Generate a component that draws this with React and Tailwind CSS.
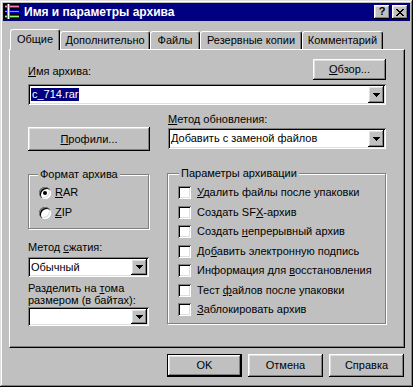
const raised =
  "bg-[#c0c0c0] shadow-[inset_-1px_-1px_#000,inset_1px_1px_#fff,inset_-2px_-2px_#808080,inset_2px_2px_#dfdfdf]";
const sunken =
  "bg-white shadow-[inset_1px_1px_#808080,inset_-1px_-1px_#fff,inset_2px_2px_#000,inset_-2px_-2px_#dfdfdf]";
const etched = "border border-[#808080] shadow-[inset_1px_1px_#fff,1px_1px_#fff]";

function RarIcon() {
  return (
    <svg width="16" height="16" shapeRendering="crispEdges" className="shrink-0">
      <rect x="0" y="0" width="16" height="5" fill="#000" />
      <rect x="1" y="1" width="14" height="3" fill="#c00060" />
      <rect x="1" y="2" width="14" height="1" fill="#ff80c0" />
      <rect x="0" y="5" width="16" height="5" fill="#000" />
      <rect x="1" y="6" width="14" height="3" fill="#0000c0" />
      <rect x="1" y="7" width="14" height="1" fill="#40c0ff" />
      <rect x="0" y="10" width="16" height="5" fill="#000" />
      <rect x="1" y="11" width="14" height="3" fill="#008000" />
      <rect x="1" y="12" width="14" height="1" fill="#80ff80" />
      <rect x="3" y="0" width="3" height="15" fill="#808080" />
      <rect x="4" y="0" width="1" height="15" fill="#fff" />
    </svg>
  );
}

function DropButton() {
  return (
    <div className={`${raised} w-[16px] h-full shrink-0 flex items-center justify-center`}>
      <svg width="7" height="4" shapeRendering="crispEdges">
        <path d="M0 0h7v1H0zM1 1h5v1H1zM2 2h3v1H2zM3 3h1v1H3z" fill="#000" />
      </svg>
    </div>
  );
}

function Combo({ className = "", children }) {
  return (
    <div className={`${sunken} p-[2px] flex ${className}`}>
      <div className="flex-1 flex items-center pl-[1px] overflow-hidden whitespace-nowrap">{children}</div>
      <DropButton />
    </div>
  );
}

function Check({ children }) {
  return (
    <div className="flex items-center h-[13px]">
      <div className={`w-[13px] h-[13px] shrink-0 ${sunken}`} />
      <span className="ml-[6px] whitespace-nowrap">{children}</span>
    </div>
  );
}

function Radio({ checked, children }) {
  return (
    <div className="flex items-center h-[13px]">
      <div className="w-[12px] h-[12px] rounded-full bg-white shadow-[inset_1px_1px_#808080,inset_2px_2px_#000,inset_-1px_-1px_#fff,inset_-2px_-2px_#dfdfdf] flex items-center justify-center">
        {checked && <div className="w-[4px] h-[4px] rounded-full bg-black" />}
      </div>
      <span className="ml-[4px]">{children}</span>
    </div>
  );
}

function Tab({ active, width, children }) {
  return (
    <div
      className={`flex items-center justify-center bg-[#c0c0c0] border-l border-t border-r border-l-white border-t-white border-r-black rounded-t-[3px] shadow-[inset_-1px_0_#808080] ${width} ${
        active ? "h-[21px] -mb-[1px] relative z-10 pb-[2px]" : "h-[18px]"
      }`}
    >
      {children}
    </div>
  );
}

function Button({ width = "w-[75px]", height = "h-[23px]", children, def }) {
  if (def) {
    return (
      <div className={`${width} ${height} border border-black flex`}>
        <div className={`${raised} flex-1 flex items-center justify-center`}>{children}</div>
      </div>
    );
  }
  return <div className={`${raised} ${width} ${height} flex items-center justify-center`}>{children}</div>;
}

export default function App() {
  return (
    <div className="w-[413px] h-[387px] bg-[#c0c0c0] p-[3px] flex flex-col text-[11px] leading-[13px] text-black font-['Liberation_Sans',Arial,sans-serif] shadow-[inset_-1px_-1px_#000,inset_1px_1px_#dfdfdf,inset_-2px_-2px_#808080,inset_2px_2px_#fff]">
      {/* title bar */}
      <div className="h-[18px] bg-[#000080] flex items-center pl-[1px] pr-[2px]">
        <RarIcon />
        <span className="ml-[4px] text-white font-bold text-[12px]">Имя и параметры архива</span>
        <div className="ml-auto flex gap-[2px]">
          <div className={`${raised} w-[16px] h-[14px] flex items-center justify-center font-bold text-[11px] leading-none pb-[1px]`}>?</div>
          <div className={`${raised} w-[16px] h-[14px] flex items-center justify-center`}>
            <svg width="8" height="7" shapeRendering="crispEdges">
              <path
                d="M0 0h2v1H0zM6 0h2v1H6zM1 1h2v1H1zM5 1h2v1H5zM2 2h4v1H2zM3 3h2v1H3zM2 4h4v1H2zM1 5h2v1H1zM5 5h2v1H5zM0 6h2v1H0zM6 6h2v1H6z"
                fill="#000"
              />
            </svg>
          </div>
        </div>
      </div>

      {/* tabs */}
      <div className="mt-[8px] pl-[7px] flex items-end">
        <Tab active width="w-[50px]">Общие</Tab>
        <Tab width="w-[90px]">Дополнительно</Tab>
        <Tab width="w-[50px]">Файлы</Tab>
        <Tab width="w-[102px]">Резервные копии</Tab>
        <Tab width="w-[81px]">Комментарий</Tab>
      </div>

      {/* panel */}
      <div className="ml-[6px] w-[396px] h-[299px] border border-white border-r-black border-b-black shadow-[inset_-1px_-1px_#808080] pt-[9px] px-[18px]">
        <div className="h-[21px] flex items-end justify-between">
          <span className="pb-[2px]">
            <u>И</u>мя архива:
          </span>
          <Button width="w-[73px]" height="h-[21px]">
            <span>
              <u>О</u>бзор...
            </span>
          </Button>
        </div>
        <Combo className="mt-[4px] h-[21px]">
          <span className="bg-[#000080] text-white px-[1px]">c_714.rar</span>
        </Combo>

        <div className="flex gap-[18px]">
          {/* left column */}
          <div className="w-[122px] flex flex-col">
            <div className="mt-[22px]">
              <Button width="w-[122px]" height="h-[24px]">
                <span>
                  <u>П</u>рофили...
                </span>
              </Button>
            </div>
            <div className={`mt-[23px] w-[121px] h-[55px] flex flex-col ${etched}`}>
              <span className="-mt-[7px] ml-[9px] px-[2px] w-fit bg-[#c0c0c0]">Формат архива</span>
              <div className="ml-[10px] mt-[5px]">
                <Radio checked>
                  <u>R</u>AR
                </Radio>
              </div>
              <div className="ml-[10px] mt-[7px]">
                <Radio>
                  <u>Z</u>IP
                </Radio>
              </div>
            </div>
            <span className="mt-[12px]">
              Метод <u>с</u>жатия:
            </span>
            <Combo className="mt-[3px] h-[20px] w-[121px]">Обычный</Combo>
            <span className="mt-[5px] leading-[12px]">
              Разделить на <u>т</u>ома
              <br />
              размером (в байтах):
            </span>
            <Combo className="mt-[1px] h-[19px] w-[121px]" />
          </div>

          {/* right column */}
          <div className="flex-1 flex flex-col">
            <span className="mt-[8px]">
              <u>М</u>етод обновления:
            </span>
            <Combo className="mt-[2px] h-[21px]">Добавить с заменой файлов</Combo>
            <div className={`mt-[24px] -ml-[1px] h-[151px] flex flex-col ${etched}`}>
              <span className="-mt-[7px] ml-[11px] px-[2px] w-fit bg-[#c0c0c0]">Параметры архивации</span>
              <div className="ml-[10px] mt-[6px] flex flex-col gap-[6.5px]">
                <Check>
                  <u>У</u>далить файлы после упаковки
                </Check>
                <Check>
                  Создать SF<u>X</u>-архив
                </Check>
                <Check>
                  Создать <u>н</u>епрерывный архив
                </Check>
                <Check>
                  До<u>б</u>авить электронную подпись
                </Check>
                <Check>
                  Информация для <u>в</u>осстановления
                </Check>
                <Check>
                  Тест <u>ф</u>айлов после упаковки
                </Check>
                <Check>
                  <u>З</u>аблокировать архив
                </Check>
              </div>
            </div>
          </div>
        </div>
      </div>

      {/* buttons */}
      <div className="mt-[6px] pr-[6px] flex justify-end gap-[6px]">
        <Button def>OK</Button>
        <Button>Отмена</Button>
        <Button>Справка</Button>
      </div>
    </div>
  );
}
